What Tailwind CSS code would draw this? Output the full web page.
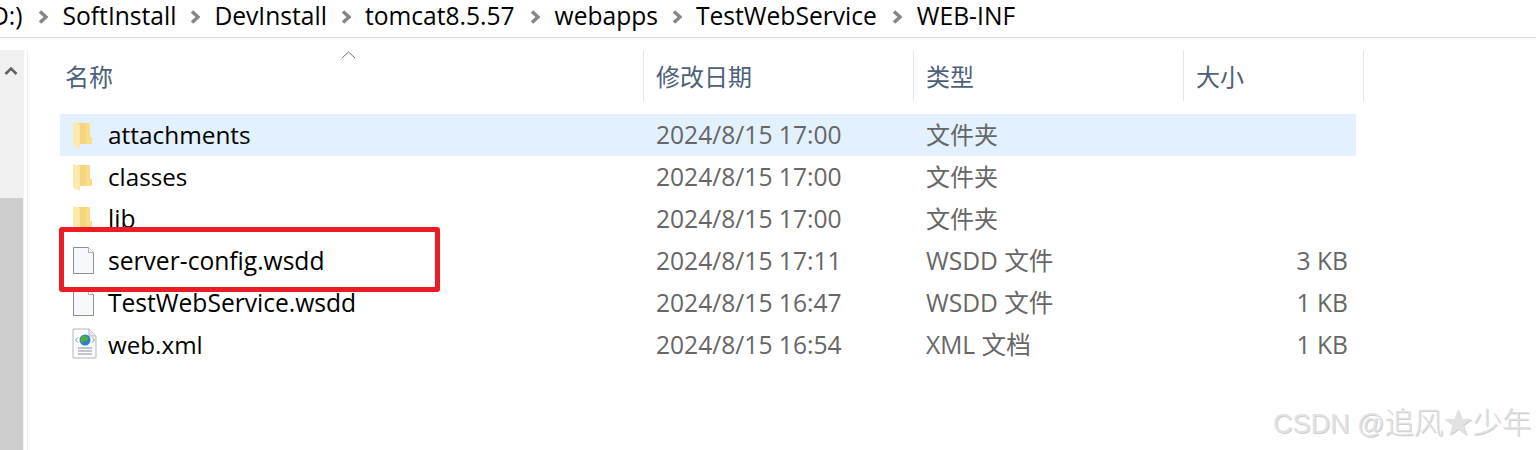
<!DOCTYPE html>
<html><head><meta charset="utf-8">
<script src="https://cdn.jsdelivr.net/npm/@tailwindcss/browser@4"></script>
</head>
<body class="bg-white overflow-hidden">
<div class="relative w-[1536px] h-[450px] overflow-hidden bg-white font-['Open_Sans','Noto_Sans_CJK_SC',sans-serif] text-[24.6px] text-black">
  <!-- breadcrumb -->
  <div class="h-[38px] border-b border-[#dcdcdc] flex items-center -ml-[9px] pb-[4px] whitespace-nowrap leading-none text-[24.6px]">
    <span>D:)</span>
    <svg class="ml-[15px] mr-[15px] w-[10px] h-[14px]" viewBox="0 0 10 14"><path d="M2 1.500 8 7 2 12.500" fill="none" stroke="#868686" stroke-width="3.500"/></svg>
    <span>SoftInstall</span>
    <svg class="ml-[14px] mr-[14px] w-[10px] h-[14px]" viewBox="0 0 10 14"><path d="M2 1.500 8 7 2 12.500" fill="none" stroke="#868686" stroke-width="3.500"/></svg>
    <span>DevInstall</span>
    <svg class="ml-[14px] mr-[14px] w-[10px] h-[14px]" viewBox="0 0 10 14"><path d="M2 1.500 8 7 2 12.500" fill="none" stroke="#868686" stroke-width="3.500"/></svg>
    <span>tomcat8.5.57</span>
    <svg class="ml-[15px] mr-[15px] w-[10px] h-[14px]" viewBox="0 0 10 14"><path d="M2 1.500 8 7 2 12.500" fill="none" stroke="#868686" stroke-width="3.500"/></svg>
    <span>webapps</span>
    <svg class="ml-[14px] mr-[14px] w-[10px] h-[14px]" viewBox="0 0 10 14"><path d="M2 1.500 8 7 2 12.500" fill="none" stroke="#868686" stroke-width="3.500"/></svg>
    <span>TestWebService</span>
    <svg class="ml-[15px] mr-[15px] w-[10px] h-[14px]" viewBox="0 0 10 14"><path d="M2 1.500 8 7 2 12.500" fill="none" stroke="#868686" stroke-width="3.500"/></svg>
    <span>WEB-INF</span>
  </div>
  <div class="flex h-[412px]">
    <!-- scrollbar -->
    <div class="w-[24px] mt-[12px] bg-[#f0f0f0] flex flex-col">
      <div class="h-[148px] flex justify-center pt-[16px]">
        <svg class="w-[14px] h-[10px] -ml-[2px]" viewBox="0 0 14 10"><path d="M1.500 8 7 2.500 12.500 8" fill="none" stroke="#606060" stroke-width="2.500"/></svg>
      </div>
      <div class="flex-1 bg-[#cdcdcd] w-[23px]"></div>
    </div>
    <div class="w-[1px] ml-[3px] mt-[12px] bg-[#f0f0f0]"></div>
    <!-- list -->
    <div class="ml-[32px] w-[1304px] relative">
      <div class="flex h-[51px] mt-[12px] text-[#4c607a] leading-none text-[24px]">
        <div class="w-[584px] border-r border-[#e5e5e5] pl-[5px] pt-[3px] flex items-center relative">名称
          <svg class="absolute left-[281px] top-[1px] w-[15px] h-[8px]" viewBox="0 0 15 8"><path d="M1 7 7.500 1 14 7" fill="none" stroke="#707070" stroke-width="1"/></svg>
        </div>
        <div class="w-[270px] border-r border-[#e5e5e5] pl-[12px] pt-[3px] flex items-center">修改日期</div>
        <div class="w-[270px] border-r border-[#e5e5e5] pl-[12px] pt-[3px] flex items-center">类型</div>
        <div class="w-[180px] border-r border-[#e5e5e5] pl-[12px] pt-[3px] flex items-center">大小</div>
      </div>
      <div class="mt-[13px] leading-none">
        <div class="flex items-center h-[42px] w-[1296px] bg-[#e2f1fd]">
          <div class="w-[584px] flex items-center pl-[12px]"><svg class="w-[20px] h-[28px] mr-[16px]" viewBox="0 0 20 28"><path d="M6 2h12v21H6z" fill="#f5d67f"/><path d="M18 2v14h2v7h-6V2z" fill="#f9dc8c"/><path d="M1 1l7 2.500V28l-7-3z" fill="#fde9ad"/></svg><span class="text-[24.400px]">attachments</span></div>
          <div class="w-[270px] pl-[12px] text-[#666]">2024/8/15 17:00</div>
          <div class="w-[270px] pl-[12px] text-[#666] text-[24px]">文件夹</div>
        </div>
        <div class="flex items-center h-[42px]">
          <div class="w-[584px] flex items-center pl-[12px]"><svg class="w-[20px] h-[28px] mr-[16px]" viewBox="0 0 20 28"><path d="M6 2h12v21H6z" fill="#f5d67f"/><path d="M18 2v14h2v7h-6V2z" fill="#f9dc8c"/><path d="M1 1l7 2.500V28l-7-3z" fill="#fde9ad"/></svg><span class="text-[24.200px]">classes</span></div>
          <div class="w-[270px] pl-[12px] text-[#666]">2024/8/15 17:00</div>
          <div class="w-[270px] pl-[12px] text-[#666] text-[24px]">文件夹</div>
        </div>
        <div class="flex items-center h-[42px]">
          <div class="w-[584px] flex items-center pl-[12px]"><svg class="w-[20px] h-[28px] mr-[16px]" viewBox="0 0 20 28"><path d="M6 2h12v21H6z" fill="#f5d67f"/><path d="M18 2v14h2v7h-6V2z" fill="#f9dc8c"/><path d="M1 1l7 2.500V28l-7-3z" fill="#fde9ad"/></svg><span>lib</span></div>
          <div class="w-[270px] pl-[12px] text-[#666]">2024/8/15 17:00</div>
          <div class="w-[270px] pl-[12px] text-[#666] text-[24px]">文件夹</div>
        </div>
        <div class="flex items-center h-[42px]">
          <div class="w-[584px] flex items-center pl-[13px]"><svg class="w-[21px] h-[27px] mr-[14px] -mt-[1px]" viewBox="0 0 21 27"><path d="M.5.500h15l5 5v21H.5z" fill="#f6f8fb" stroke="#8e8e8e"/><path d="M15.500.500v5h5" fill="#fff" stroke="#b0b0b0"/></svg><span>server-config.wsdd</span></div>
          <div class="w-[270px] pl-[12px] text-[#666]">2024/8/15 17:11</div>
          <div class="w-[270px] pl-[12px] text-[#666]">WSDD 文件</div>
          <div class="w-[164px] text-right text-[#666]">3 KB</div>
        </div>
        <div class="flex items-center h-[42px]">
          <div class="w-[584px] flex items-center pl-[13px]"><svg class="w-[21px] h-[27px] mr-[14px] -mt-[1px]" viewBox="0 0 21 27"><path d="M.5.500h15l5 5v21H.5z" fill="#f6f8fb" stroke="#8e8e8e"/><path d="M15.500.500v5h5" fill="#fff" stroke="#b0b0b0"/></svg><span>TestWebService.wsdd</span></div>
          <div class="w-[270px] pl-[12px] text-[#666]">2024/8/15 16:47</div>
          <div class="w-[270px] pl-[12px] text-[#666]">WSDD 文件</div>
          <div class="w-[164px] text-right text-[#666]">1 KB</div>
        </div>
        <div class="flex items-center h-[42px]">
          <div class="w-[584px] flex items-center pl-[12px]"><svg class="w-[26px] h-[32px] mr-[10px] -mt-[2px]" viewBox="0 0 26 32"><path d="M1 1h16l7 7v22H1z" fill="#fbfcfe" stroke="#b5b5b5"/><path d="M17 1v7h7" fill="#e8e8e8" stroke="#b5b5b5"/><circle cx="13" cy="12" r="5.500" fill="#2a7fd0"/><path d="M10 8c3-1 5 0 6 2s-1 3-3 3-1 3-3 2-2-5 0-7z" fill="#4caf3c"/><path d="M6 9.500 3.500 12 6 14.500M20 9.500 22.500 12 20 14.500" fill="none" stroke="#8a8a9a" stroke-width="1"/><path d="M6 20h14M6 23h14M6 26h14" stroke="#8d8da8" stroke-width="1.200"/></svg><span class="text-[24.200px]">web.xml</span></div>
          <div class="w-[270px] pl-[12px] text-[#666]">2024/8/15 16:54</div>
          <div class="w-[270px] pl-[12px] text-[#666]">XML 文档</div>
          <div class="w-[164px] text-right text-[#666]">1 KB</div>
        </div>
      </div>
    </div>
  </div>
  <!-- annotation -->
  <div class="absolute left-[59px] top-[227px] w-[381px] h-[65px] border-[5px] border-[#ed1c24] rounded-[3px]"></div>
  <!-- watermark -->
  <div class="absolute left-[1273px] top-[406px] text-[27px] leading-[34px] whitespace-nowrap text-[#e2e2e2] [text-shadow:1px_1px_0_#cfcfcf] font-['Liberation_Sans','Noto_Sans_CJK_SC',sans-serif]">CSDN @<span class="text-[29.400px] font-light">追风★少年</span></div>
</div>
</body></html>
